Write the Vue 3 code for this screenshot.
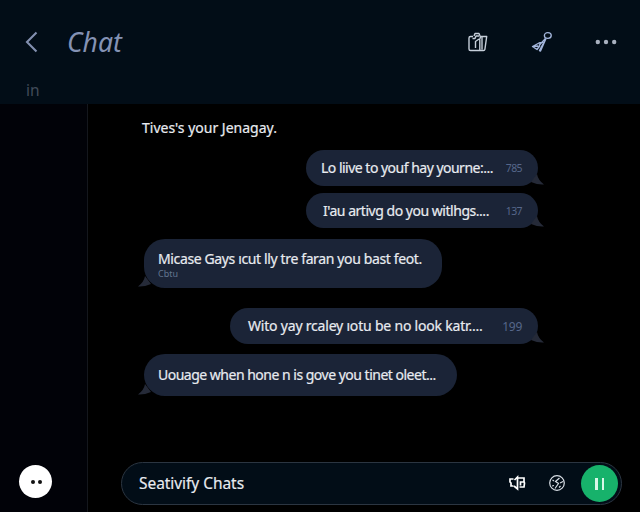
<script setup>
const messages = [
  { id: 1, side: 'out', text: 'Lo liive to youf hay yourne:...', time: '785', w: 232, h: 36, top: 12, pad: 15, ls: -0.51 },
  { id: 2, side: 'out', text: "I'au artivg do you witlhgs....", time: '137', w: 232, h: 35, top: 7, pad: 17, ls: -0.47 },
  { id: 3, side: 'in', text: 'Micase Gays ıcut lly tre faran you bast feot.', note: 'Cbtu', w: 298, h: 49, top: 11, pad: 14, ls: -0.37 },
  { id: 4, side: 'out', text: 'Wito yay rcaley ıotu be no look katr....', time: '199', w: 308, h: 36, top: 20, pad: 18, ls: -0.2 },
  { id: 5, side: 'in', text: 'Uouage when hone n is gove you tinet oleet...', w: 313, h: 42, top: 10, pad: 14, ls: -0.5 },
]
</script>

<template>
  <div class="app">
    <header class="header">
      <div class="bar">
        <svg class="back" width="16" height="24" viewBox="0 0 16 24"><path d="M12.500 2.500 3 12l9.500 9.500" /></svg>
        <h1 class="title">Chat</h1>
        <div class="actions">
          <svg class="line" width="22" height="22" viewBox="0 0 22 22">
            <path d="M6 5.500H3.500Q2 5.500 2 7v11q0 1.500 1.500 1.500h13q1.200 0 1.400-1.200L19.700 5.500H14M5.500 7.500H8L9 5h3M7 5 8 2.500h4L13.500 6l-1 3M8.500 17v-6.500L12 8M12.800 9v10M15 6v12.500" />
          </svg>
          <svg class="line blue" width="22" height="22" viewBox="0 0 22 22">
            <ellipse cx="16.800" cy="4.500" rx="3.400" ry="2.900" />
            <path d="M15 7.500 9.500 20 8.500 19.500 12.500 12M14.500 7.500 8 14.500M12.500 11 8 12 1.500 15.500 6 18.500 9 14.500M1.800 15.500l5.500-.500" />
          </svg>
          <svg class="dots" width="24" height="8" viewBox="0 0 24 8">
            <circle cx="3.800" cy="4" r="2.200" /><circle cx="12" cy="4" r="2.200" /><circle cx="20.200" cy="4" r="2.200" />
          </svg>
        </div>
      </div>
      <div class="sub">in</div>
    </header>

    <div class="body">
      <aside class="side">
        <div class="avatar"><i></i><i></i></div>
      </aside>
      <main class="main">
        <p class="intro">Tives's your Jenagay.</p>
        <div class="thread">
          <div
            v-for="m in messages"
            :key="m.id"
            class="bubble"
            :class="m.side"
            :style="{ width: m.w + 'px', height: m.h + 'px', marginTop: m.top + 'px', paddingLeft: m.pad + 'px' }"
          >
            <div class="copy">
              <span class="text" :style="{ letterSpacing: m.ls + 'px' }">{{ m.text }}</span>
              <span v-if="m.note" class="note">{{ m.note }}</span>
            </div>
            <span v-if="m.time" class="time" :class="{ small: m.id < 3 }">{{ m.time }}</span>
            <svg class="tail" width="18" height="14" viewBox="0 0 18 14"><path d="M11 2Q12 8 18 12.500 12 13 5 10Z" /></svg>
          </div>
        </div>
        <div class="composer">
          <span class="field">Seativify Chats</span>
          <svg class="tool sound" width="18" height="18" viewBox="0 0 18 18">
            <path d="M5.500 5H2v3l1 1v3h2.500M6.500 6 9.500 3v12L6 12M10 4h6v3.500l.500 1.500-.500 4h-4.500M15.500 8h-3v3.500" />
          </svg>
          <svg class="tool round" width="18" height="18" viewBox="0 0 18 18">
            <circle cx="9" cy="9" r="7.300" /><path d="M11.500 4 7.500 7.500l3 2-3.500 5M4.500 6l1.500 1M12 9l3-1.500M4 12l2-.500M11 13.500l1.500-1.500" />
          </svg>
          <button class="go"><i></i><i></i></button>
        </div>
      </main>
    </div>
  </div>
</template>

<style>
body { background: #000; }
</style>
<style scoped>
* { box-sizing: border-box; }
.app { width: 640px; height: 512px; overflow: hidden; background: #000; color: #e8ebf0; font-family: "Noto Sans", sans-serif; display: flex; flex-direction: column; }
.header { height: 104px; flex: none; background: #020d17; }
.bar { height: 82px; display: flex; align-items: center; padding: 1px 22px 0 24px; }
.back { fill: none; stroke: #8390b0; stroke-width: 2.1; }
.title { margin: 0 0 0 27px; font-size: 26.5px; font-weight: 400; font-style: italic; color: #8492b4; line-height: 36px; letter-spacing: 0; }
.actions { margin-left: auto; display: flex; align-items: center; }
.line { fill: none; stroke: #c6cfda; stroke-width: 1.4; stroke-linejoin: round; }
.line.blue { stroke: #a4b6dc; margin-left: 42px; }
.dots { fill: #a8b0bf; margin-left: 41px; }
.sub { padding-left: 26px; font-size: 15.5px; line-height: 17px; color: #414b59; }
.body { flex: 1; display: flex; }
.side { width: 88px; background: #010208; border-right: 1px solid #14171d; display: flex; align-items: flex-end; padding: 0 0 14px 19px; }
.avatar { width: 33px; height: 33px; border-radius: 50%; background: #fff; display: flex; align-items: center; justify-content: center; gap: 3px; padding-left: 1px; }
.avatar i { width: 4px; height: 4px; border-radius: 50%; background: #111; }
.main { flex: 1; display: flex; flex-direction: column; }
.intro { margin: 14px 0 0 54px; font-size: 14px; line-height: 20px; white-space: pre; -webkit-text-stroke: 0.2px; }
.thread { flex: 1; display: flex; flex-direction: column; padding: 0 102px 0 56px; }
.bubble { position: relative; flex: none; background: #1b2437; border-radius: 21px; display: flex; align-items: center; justify-content: space-between; padding-right: 16px; }
.bubble.out { align-self: flex-end; }
.copy { display: flex; flex-direction: column; }
.text { font-size: 14px; line-height: 18px; white-space: pre; -webkit-text-stroke: 0.2px; }
.note { margin-top: 1px; font-size: 9px; line-height: 9px; color: #62758f; }
.time { font-size: 12px; color: #56678a; letter-spacing: -0.3px; }
.time.small { font-size: 10.5px; letter-spacing: -0.6px; }
.tail { position: absolute; right: -6px; bottom: 0; fill: #252a38; }
.in .tail { right: auto; left: -6px; transform: scaleX(-1); }
.composer { width: 501px; height: 43px; margin: 0 0 7px 33px; border: 1px solid #2b3541; border-radius: 22px; background: #020d17; display: flex; align-items: center; padding: 0 3px 0 17px; }
.field { flex: 1; margin-top: -2px; font-size: 15.5px; white-space: pre; letter-spacing: -0.05px; -webkit-text-stroke: 0.15px; }
.tool { fill: none; stroke: #d8dee5; stroke-width: 1.2; }
.sound { stroke: #fff; stroke-width: 1.7; margin: -2px 22px 0 0; }
.round { margin: -2px 15px 0 0; }
.go { width: 37px; height: 37px; padding: 0; border: 0; border-radius: 50%; background: #17b26b; display: flex; align-items: center; justify-content: center; gap: 4px; }
.go i { width: 2.5px; height: 12px; background: #d9f7e8; }
</style>
